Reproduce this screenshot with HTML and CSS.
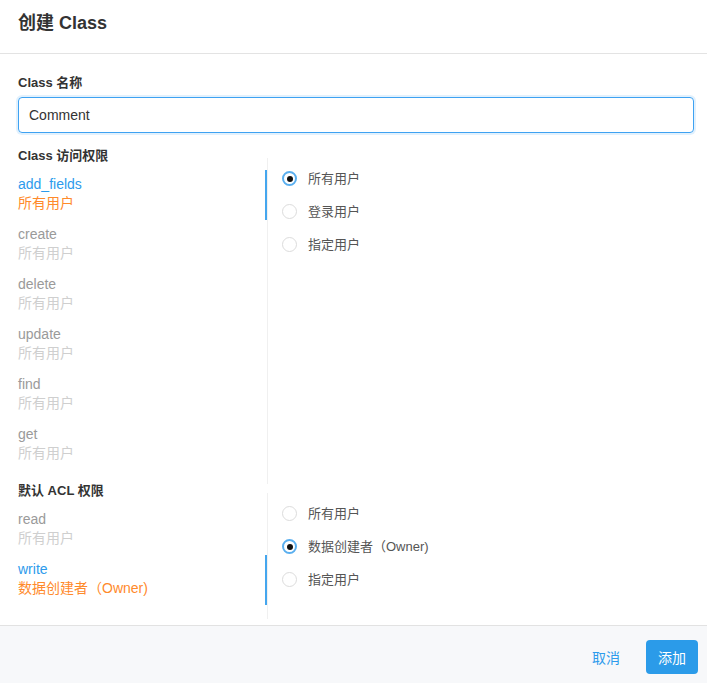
FILE: index.html
```html
<!DOCTYPE html>
<html lang="zh-CN">
<head>
<meta charset="utf-8">
<title>创建 Class</title>
<link rel="stylesheet" href="styles.css">
</head>
<body>
<div class="modal">
  <div class="modal-header">
    <h1 class="modal-title">创建 Class</h1>
  </div>
  <div class="modal-body">
    <label class="field-label">Class 名称</label>
    <div class="input">Comment</div>

    <div class="perm-section">
      <div class="perm-list">
        <div class="section-title">Class 访问权限</div>
        <div class="perm-item active"><div class="perm-name">add_fields</div><div class="perm-value">所有用户</div></div>
        <div class="perm-item"><div class="perm-name">create</div><div class="perm-value">所有用户</div></div>
        <div class="perm-item"><div class="perm-name">delete</div><div class="perm-value">所有用户</div></div>
        <div class="perm-item"><div class="perm-name">update</div><div class="perm-value">所有用户</div></div>
        <div class="perm-item"><div class="perm-name">find</div><div class="perm-value">所有用户</div></div>
        <div class="perm-item"><div class="perm-name">get</div><div class="perm-value">所有用户</div></div>
      </div>
      <div class="perm-pane">
        <div class="radio-row"><span class="radio checked"></span><span class="radio-label">所有用户</span></div>
        <div class="radio-row"><span class="radio"></span><span class="radio-label">登录用户</span></div>
        <div class="radio-row"><span class="radio"></span><span class="radio-label">指定用户</span></div>
      </div>
    </div>

    <div class="perm-section second">
      <div class="perm-list">
        <div class="section-title">默认 ACL 权限</div>
        <div class="perm-item"><div class="perm-name">read</div><div class="perm-value">所有用户</div></div>
        <div class="perm-item active"><div class="perm-name">write</div><div class="perm-value">数据创建者（Owner)</div></div>
      </div>
      <div class="perm-pane">
        <div class="radio-row"><span class="radio"></span><span class="radio-label">所有用户</span></div>
        <div class="radio-row"><span class="radio checked"></span><span class="radio-label">数据创建者（Owner)</span></div>
        <div class="radio-row"><span class="radio"></span><span class="radio-label">指定用户</span></div>
      </div>
    </div>
  </div>
  <div class="modal-footer">
    <button class="btn btn-link">取消</button>
    <button class="btn btn-primary">添加</button>
  </div>
</div>
</body>
</html>
```
FILE: styles.css
```css
* { box-sizing: border-box; }
html, body { margin: 0; padding: 0; background: #fff; }
body {
  font-family: "Liberation Sans", Arial, "Noto Sans CJK SC", sans-serif;
  color: #333;
}
.modal { width: 707px; height: 683px; display: flex; flex-direction: column; background: #fff; overflow: hidden; }
.modal-header {
  height: 54px;
  border-bottom: 1px solid #e3e3e3;
  padding: 0 18px;
  display: flex;
  align-items: center;
}
.modal-title {
  margin: 0 0 8px;
  font-size: 18px;
  font-weight: bold;
  color: #333;
  line-height: 24px;
}
.modal-body { padding: 20px 13px 0 18px; flex: 1; }
.field-label {
  display: block;
  font-size: 13px;
  line-height: 18px;
  font-weight: 600;
  color: #333;
  margin-bottom: 5px;
}
.input {
  height: 36px;
  border: 1px solid #3ea2f2;
  border-radius: 4px;
  box-shadow: 0 0 0 2px rgba(62, 162, 242, 0.15);
  padding: 0 10px;
  font-size: 14px;
  line-height: 34px;
  color: #333;
}
.perm-section { display: flex; margin-top: 14px; }
.perm-section.second { margin-top: -2px; }
.perm-list { width: 249px; flex: none; padding-bottom: 14px; }
.section-title {
  font-size: 13px;
  line-height: 18px;
  font-weight: 600;
  color: #333;
  margin-bottom: 5px;
}
.perm-item {
  height: 50px;
  padding-top: 4px;
  border-right: 2px solid transparent;
}
.perm-item.active { border-right-color: #45a6ee; }
.perm-name { font-size: 14px; line-height: 20px; color: #9a9a9a; }
.perm-value { font-size: 14px; line-height: 20px; color: #cfcfcf; margin-top: -1px; }
.perm-item.active .perm-name { color: #2d9bec; }
.perm-item.active .perm-value { color: #ff8a2b; }
.perm-pane {
  flex: 1;
  margin-top: 11px;
  border-left: 1px solid #f0f0f0;
  padding: 4px 0 0 14px;
}
.radio-row { height: 33px; display: flex; align-items: center; }
.radio {
  width: 15px;
  height: 15px;
  border: 1px solid #dcdcdc;
  border-radius: 50%;
  flex: none;
  position: relative;
  margin-right: 11px;
}
.radio.checked { border: 2px solid #5aafef; }
.radio.checked::after {
  content: "";
  position: absolute;
  left: 2.5px;
  top: 2.5px;
  width: 6px;
  height: 6px;
  border-radius: 50%;
  background: #111;
}
.radio-label { font-size: 13px; color: #555; line-height: 18px; }
.modal-footer {
  height: 58px;
  border-top: 1px solid #e2e2e2;
  background: #f7f8fa;
  display: flex;
  justify-content: flex-end;
  align-items: flex-start;
  padding: 14px 9px 0 0;
  gap: 14px;
}
.btn {
  font-family: inherit;
  height: 34px;
  border-radius: 4px;
  font-size: 14px;
  padding: 0 12px;
  border: 0;
  cursor: pointer;
}
.btn-link { background: transparent; color: #2d9bec; width: 52px; padding: 0; }
.btn-primary { background: #2b9be9; color: #fff; width: 52px; padding: 0; }
```
